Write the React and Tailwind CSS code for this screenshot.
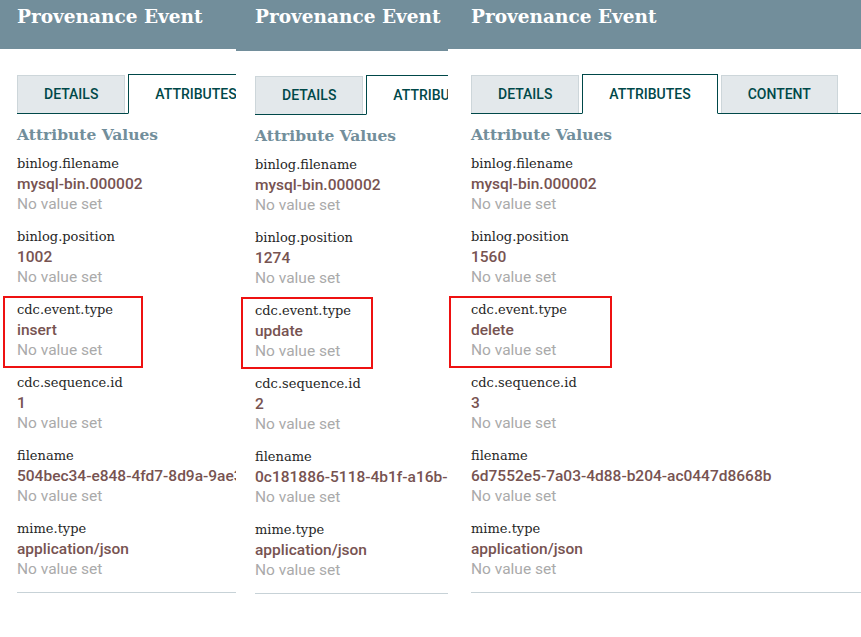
import React from 'react';

const panels = [
  {
    width: 'w-[236px]',
    pad: 'pl-[17px]',
    header: 'h-[49px]',
    tabsTop: 'mt-[25px]',
    box: 'left-[-14px] w-[140px]',
    tabs: ['DETAILS', 'ATTRIBUTES', 'CONTENT'],
    values: ['mysql-bin.000002', '1002', 'insert', '1', '504bec34-e848-4fd7-8d9a-9ae3c1f0b2d4', 'application/json'],
  },
  {
    width: 'w-[212px]',
    pad: 'pl-[19px]',
    header: 'h-[51px]',
    tabsTop: 'mt-[24px]',
    box: 'left-[-14px] w-[132px]',
    tabs: ['DETAILS', 'ATTRIBUTES', 'CONTENT'],
    values: ['mysql-bin.000002', '1274', 'update', '2', '0c181886-5118-4b1f-a16b-7d21e09f4c3a', 'application/json'],
  },
  {
    width: 'w-[413px]',
    pad: 'pl-[23px]',
    header: 'h-[49px]',
    tabsTop: 'mt-[25px]',
    box: 'left-[-22px] w-[163px]',
    tabs: ['DETAILS', 'ATTRIBUTES', 'CONTENT'],
    values: ['mysql-bin.000002', '1560', 'delete', '3', '6d7552e5-7a03-4d88-b204-ac0447d8668b', 'application/json'],
  },
];

const names = ['binlog.filename', 'binlog.position', 'cdc.event.type', 'cdc.sequence.id', 'filename', 'mime.type'];

function Tab({ label, active }) {
  if (active) {
    return (
      <div className="h-[40px] -mb-px px-[26px] flex items-center bg-white border border-[#004849] border-b-white text-[14px] font-medium text-[#004849] shrink-0">
        {label}
      </div>
    );
  }
  return (
    <div className="h-[38px] px-[26px] flex items-center bg-[#e3e8eb] border border-b-0 border-[#cdd6da] text-[14px] font-medium text-[#004849] shrink-0">
      {label}
    </div>
  );
}

function Panel({ p }) {
  return (
    <div className={`${p.width} shrink-0 overflow-hidden whitespace-nowrap`}>
      <div className={`${p.header} bg-[#728e9b] ${p.pad} pt-[4px]`}>
        <div className="text-[18.5px] leading-[26px] font-bold text-white font-['DejaVu_Serif',serif]">Provenance Event</div>
      </div>
      <div className={p.pad}>
        <div className={`${p.tabsTop} flex items-end gap-[3px] border-b border-[#004849] font-['Roboto',sans-serif]`}>
          {p.tabs.map((t) => (
            <Tab key={t} label={t} active={t === 'ATTRIBUTES'} />
          ))}
        </div>
        <div className="mt-[11px] text-[15.5px] leading-[20px] font-bold text-[#728e9b] font-['DejaVu_Serif',serif]">
          Attribute Values
        </div>
        <div className="mt-[9px] flex flex-col gap-[13px]">
          {names.map((n, i) => (
            <div key={n} className="relative leading-[20px]">
              {n === 'cdc.event.type' && (
                <span className={`absolute top-[-4px] bottom-[-8px] ${p.box} border-2 border-[#ee1111]`} />
              )}
              <div className="text-[13px] text-[#262626] font-['DejaVu_Serif',serif] font-light">{n}</div>
              <div className="text-[15.5px] font-medium text-[#775351] font-['Roboto',sans-serif]">{p.values[i]}</div>
              <div className="text-[15.5px] text-[#aaaaaa] font-['Roboto',sans-serif]">No value set</div>
            </div>
          ))}
        </div>
        <div className="mt-[13px] border-t border-[#c7d2d7]" />
      </div>
    </div>
  );
}

export default function App() {
  return (
    <div className="flex w-[861px] h-[637px] bg-white overflow-hidden">
      {panels.map((p, i) => (
        <Panel key={i} p={p} />
      ))}
    </div>
  );
}
